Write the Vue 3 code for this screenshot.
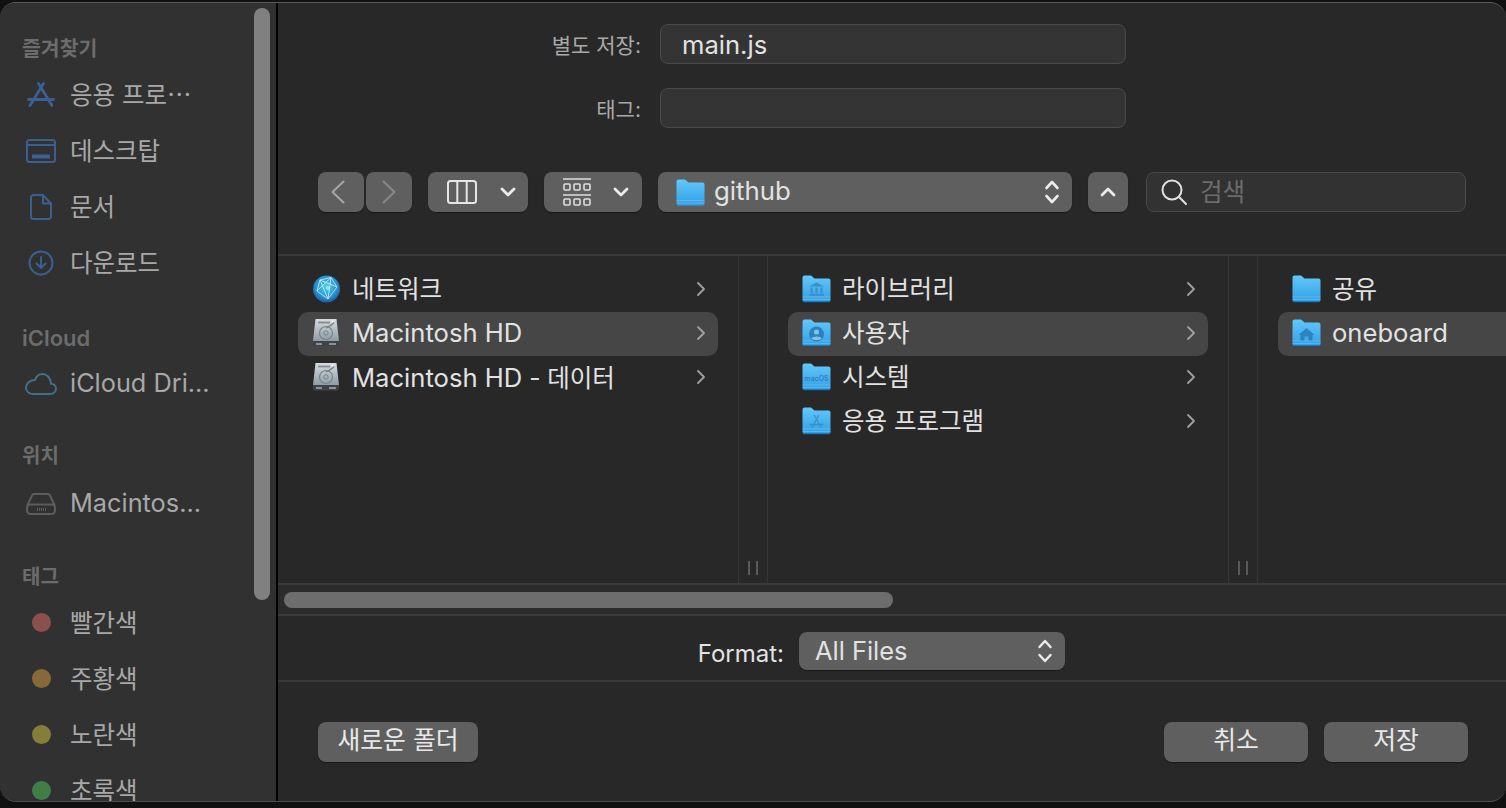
<script setup>
const favorites = [
  { icon: 'apps', label: '응용 프로⋯' },
  { icon: 'desktop', label: '데스크탑' },
  { icon: 'doc', label: '문서' },
  { icon: 'download', label: '다운로드' },
];
const tags = [
  { label: '빨간색', color: '#8a4f4e' },
  { label: '주황색', color: '#876839' },
  { label: '노란색', color: '#857d3a' },
  { label: '초록색', color: '#3f7f47' },
];
const columns = [
  {
    rows: [
      { icon: 'globe', label: '네트워크', ko: true, more: true },
      { icon: 'disk', label: 'Macintosh HD', more: true, selected: true },
      { icon: 'disk', label: 'Macintosh HD', suffix: ' - 데이터', more: true },
    ],
  },
  {
    rows: [
      { icon: 'folder', badge: 'library', label: '라이브러리', ko: true, more: true },
      { icon: 'folder', badge: 'user', label: '사용자', ko: true, more: true, selected: true },
      { icon: 'folder', badge: 'macos', label: '시스템', ko: true, more: true },
      { icon: 'folder', badge: 'apps', label: '응용 프로그램', ko: true, more: true },
    ],
  },
  {
    rows: [
      { icon: 'folder', label: '공유', ko: true },
      { icon: 'folder', badge: 'home', label: 'oneboard', selected: true },
    ],
  },
];
</script>

<template>
  <svg class="defs" width="0" height="0">
    <defs>
      <linearGradient id="folderFill" x1="0" y1="0" x2="0" y2="1">
        <stop offset="0" stop-color="#62c8fb" />
        <stop offset="1" stop-color="#329fe6" />
      </linearGradient>
      <linearGradient id="diskFill" x1="0" y1="0" x2="0" y2="1">
        <stop offset="0" stop-color="#d6dde0" />
        <stop offset="1" stop-color="#8f9ca3" />
      </linearGradient>
      <radialGradient id="globeFill" cx="0.5" cy="0.42" r="0.62">
        <stop offset="0" stop-color="#54d2e2" />
        <stop offset="0.65" stop-color="#2a8ed0" />
        <stop offset="1" stop-color="#1b4e9a" />
      </radialGradient>
    </defs>
  </svg>
  <div class="window">
    <aside class="sidebar">
      <div class="side-title first">즐겨찾기</div>
      <div v-for="item in favorites" :key="item.label" class="side-item ko">
        <span class="side-icon">
          <svg v-if="item.icon === 'apps'" width="28" height="25" viewBox="0 0 28 25" fill="none" stroke="#3a5f92" stroke-width="2.800" stroke-linecap="round">
            <path d="M11.500 1.500 L25 23.500" />
            <path d="M16.500 1.500 L3 23.500" />
            <path d="M1.500 17.500 H26.500" />
          </svg>
          <svg v-else-if="item.icon === 'desktop'" width="30" height="24" viewBox="0 0 30 24" fill="none" stroke="#3a5f92" stroke-width="2">
            <rect x="1" y="1" width="28" height="22" rx="2.500" />
            <path d="M1 6 H29" />
            <path d="M6 17.500 H24" stroke-width="4" />
          </svg>
          <svg v-else-if="item.icon === 'doc'" width="22" height="26" viewBox="0 0 22 26" fill="none" stroke="#3a5f92" stroke-width="2">
            <path d="M3.500 1 H13 L21 9.500 V22.500 A2.500 2.500 0 0 1 18.500 25 H3.500 A2.500 2.500 0 0 1 1 22.500 V3.500 A2.500 2.500 0 0 1 3.500 1 Z" />
            <path d="M13 1 V9.500 H21" />
          </svg>
          <svg v-else width="26" height="26" viewBox="0 0 26 26" fill="none" stroke="#3a5f92" stroke-width="2" stroke-linecap="round" stroke-linejoin="round">
            <circle cx="13" cy="13" r="11.500" />
            <path d="M13 7 V18 M8.500 13.500 L13 18 L17.500 13.500" />
          </svg>
        </span>
        <span>{{ item.label }}</span>
      </div>

      <div class="side-title cloud">iCloud</div>
      <div class="side-item">
        <span class="side-icon">
          <svg width="32" height="24" viewBox="0 0 32 24" fill="none" stroke="#41708a" stroke-width="2">
            <path d="M7.500 22 H25 C28.500 22 31 19.800 31 16.800 C31 14 28.800 12 26.200 11.800 C25.600 6 22 2 17.500 2 C13.500 2 11.200 4.600 10 8 C5 7.800 1 11.500 1 15.500 C1 19.200 3.800 22 7.500 22 Z" />
          </svg>
        </span>
        <span>iCloud Dri...</span>
      </div>

      <div class="side-title place">위치</div>
      <div class="side-item">
        <span class="side-icon">
          <svg width="30" height="22" viewBox="0 0 30 22" fill="none" stroke="#5d5d5d" stroke-width="2">
            <path d="M1 13 L6 2.500 A2.500 2.500 0 0 1 8 1 H22 A2.500 2.500 0 0 1 24 2.500 L29 13" />
            <rect x="1" y="11.500" width="28" height="9.500" rx="3.500" />
            <path d="M11 16.500 H20" stroke-width="3" stroke-dasharray="1 1" />
          </svg>
        </span>
        <span>Macintos...</span>
      </div>

      <div class="side-title tag">태그</div>
      <div v-for="tag in tags" :key="tag.label" class="side-item ko">
        <span class="side-icon">
          <span class="dot" :style="{ background: tag.color }"></span>
        </span>
        <span>{{ tag.label }}</span>
      </div>

      <div class="side-scroll"></div>
    </aside>

    <main class="panel">
      <div class="name-form">
        <div class="form-row">
          <label>별도 저장:</label>
          <div class="field">main.js</div>
        </div>
        <div class="form-row">
          <label>태그:</label>
          <div class="field"></div>
        </div>
      </div>

      <div class="toolbar">
        <div class="nav-pair">
          <div class="btn nav back">
            <svg width="14" height="24" viewBox="0 0 14 24" fill="none" stroke="#a6a6a6" stroke-width="2" stroke-linecap="round" stroke-linejoin="round"><path d="M12.500 1.500 L1.500 12 L12.500 22.500" /></svg>
          </div>
          <div class="btn nav">
            <svg width="14" height="24" viewBox="0 0 14 24" fill="none" stroke="#878787" stroke-width="2" stroke-linecap="round" stroke-linejoin="round"><path d="M1.500 1.500 L12.500 12 L1.500 22.500" /></svg>
          </div>
        </div>
        <div class="btn view">
          <svg width="30" height="24" viewBox="0 0 30 24" fill="none" stroke="#e6e6e6" stroke-width="2"><rect x="1" y="1" width="28" height="22" rx="2.500" /><path d="M10.300 1 V23 M19.700 1 V23" /></svg>
          <svg class="chev" width="16" height="10" viewBox="0 0 16 10" fill="none" stroke="#ececec" stroke-width="2.800" stroke-linecap="round" stroke-linejoin="round"><path d="M2 2 L8 8 L14 2" /></svg>
        </div>
        <div class="btn group">
          <svg width="28" height="28" viewBox="0 0 28 28" fill="none" stroke="#dedede" stroke-width="1.600">
            <path d="M0 1 H28 M0 17 H28" />
            <rect x="1" y="6" width="6" height="6" rx="1" />
            <rect x="11" y="6" width="6" height="6" rx="1" />
            <rect x="21" y="6" width="6" height="6" rx="1" />
            <rect x="1" y="21" width="6" height="6" rx="1" />
            <rect x="11" y="21" width="6" height="6" rx="1" />
            <rect x="21" y="21" width="6" height="6" rx="1" />
          </svg>
          <svg class="chev" width="16" height="10" viewBox="0 0 16 10" fill="none" stroke="#ececec" stroke-width="2.800" stroke-linecap="round" stroke-linejoin="round"><path d="M2 2 L8 8 L14 2" /></svg>
        </div>
        <div class="btn path">
          <svg width="29" height="27" viewBox="0 0 29 27">
            <path d="M0.500 2.500 A2 2 0 0 1 2.500 0.500 H9 L12.500 3.500 H26.500 A2 2 0 0 1 28.500 5.500 V24.500 A2 2 0 0 1 26.500 26.500 H2.500 A2 2 0 0 1 0.500 24.500 Z" fill="url(#folderFill)" />
            <path d="M0.500 21.500 H28.500 M0.500 24 H28.500" stroke="#8ad6f9" stroke-width="0.800" opacity="0.500" />
          </svg>
          <span class="path-name">github</span>
          <svg class="updown" width="16" height="26" viewBox="0 0 16 26" fill="none" stroke="#ececec" stroke-width="2.600" stroke-linecap="round" stroke-linejoin="round"><path d="M2.500 9 L8 3 L13.500 9 M2.500 17 L8 23 L13.500 17" /></svg>
        </div>
        <div class="btn up">
          <svg width="16" height="10" viewBox="0 0 16 10" fill="none" stroke="#ececec" stroke-width="2.800" stroke-linecap="round" stroke-linejoin="round"><path d="M2 8 L8 2 L14 8" /></svg>
        </div>
        <div class="search">
          <svg width="26" height="26" viewBox="0 0 26 26" fill="none" stroke="#e0e0e0" stroke-width="2" stroke-linecap="round"><circle cx="11" cy="11" r="9.500" /><path d="M17.800 17.800 L25 25" /></svg>
          <span>검색</span>
        </div>
      </div>

      <div class="browser">
        <template v-for="(col, i) in columns" :key="i">
          <div class="column" :class="{ last: i === columns.length - 1 }">
            <div v-for="(row, r) in col.rows" :key="r" class="row" :class="{ selected: row.selected }">
              <svg v-if="row.icon === 'folder'" class="row-icon" width="30" height="28" viewBox="0 0 30 28">
                <path d="M0.500 2.500 A2 2 0 0 1 2.500 0.500 H9 L12.500 3.500 H26.500 A2 2 0 0 1 28.500 5.500 V25 A2 2 0 0 1 26.500 27 H2.500 A2 2 0 0 1 0.500 25 Z" fill="url(#folderFill)" />
                <path d="M0.500 22 H28.500 M0.500 24.500 H28.500" stroke="#8ad6f9" stroke-width="0.800" opacity="0.500" />
                <path d="M1.500 27 H27.500" stroke="#12507a" stroke-width="1" />
                <g v-if="row.badge === 'library'" fill="#3b8fc8">
                  <path d="M14.500 7.500 L22 11.500 H7 Z" />
                  <rect x="8.500" y="12.500" width="2.200" height="6" />
                  <rect x="13.400" y="12.500" width="2.200" height="6" />
                  <rect x="18.300" y="12.500" width="2.200" height="6" />
                  <rect x="7" y="19" width="15" height="1.800" />
                </g>
                <g v-if="row.badge === 'user'">
                  <circle cx="14.500" cy="15" r="7.500" fill="#2f7fb8" />
                  <circle cx="14.500" cy="13" r="2.600" fill="#79c4ee" />
                  <path d="M9.300 19.500 C10.500 16.800 18.500 16.800 19.700 19.500 C17.500 21.500 11.500 21.500 9.300 19.500 Z" fill="#79c4ee" />
                </g>
                <text v-if="row.badge === 'macos'" x="14.500" y="17.500" text-anchor="middle" class="mac-badge">macOS</text>
                <g v-if="row.badge === 'apps'" fill="none" stroke="#3b8fc8" stroke-width="1.300" stroke-linecap="round">
                  <path d="M12.500 8.500 L19 20.500 M16.500 8.500 L10 20.500 M8 17.500 H21" />
                </g>
                <g v-if="row.badge === 'home'" fill="#2f82c0">
                  <path d="M14.500 9 L22.500 16 H20.500 V21.500 H16.500 V17.500 H12.500 V21.500 H8.500 V16 H6.500 Z" />
                </g>
              </svg>
              <svg v-else-if="row.icon === 'globe'" class="row-icon" width="30" height="30" viewBox="0 0 30 30">
                <circle cx="14.500" cy="15" r="13.500" fill="url(#globeFill)" />
                <path d="M8 6 L19 3.500 L25 13 L16 25 L5 17 Z M8 6 L16 25 M19 3.500 L5 17 M25 13 L8 6 M19 3.500 L16 25" fill="none" stroke="#c8f4f6" stroke-width="0.800" />
                <circle cx="16" cy="14" r="2" fill="#d6fbfb" opacity="0.500" />
              </svg>
              <svg v-else class="row-icon" width="30" height="30" viewBox="0 0 30 30">
                <path d="M3.500 1 H24.500 L27 23 H1 Z" fill="url(#diskFill)" />
                <path d="M1 23 H27 V27 A1.500 1.500 0 0 1 25.500 28.500 H2.500 A1.500 1.500 0 0 1 1 27 Z" fill="#3e4347" />
                <path d="M4 26 H10 M17 26 H24" stroke="#a6adb2" stroke-width="1.500" />
                <circle cx="14" cy="15" r="6.500" fill="none" stroke="#76838a" stroke-width="1.200" />
                <circle cx="14" cy="15" r="2.200" fill="none" stroke="#76838a" stroke-width="1" />
                <path d="M14 10 C18 8 20 7 22 4.500" fill="none" stroke="#76838a" stroke-width="1.300" />
                <path d="M6 4.500 H18" stroke="#818e95" stroke-width="1.800" />
                <circle cx="20.500" cy="3.500" r="1.100" fill="#fff" />
              </svg>
              <span class="row-label" :class="{ ko: row.ko }">{{ row.label }}<span v-if="row.suffix" class="suffix">{{ row.suffix }}</span></span>
              <svg v-if="row.more" class="row-more" width="10" height="16" viewBox="0 0 10 16" fill="none" stroke="#a0a0a0" stroke-width="1.800" stroke-linecap="round" stroke-linejoin="round"><path d="M2 2 L8 8 L2 14" /></svg>
            </div>
          </div>
          <div v-if="i < columns.length - 1" class="col-handle"><span></span><span></span></div>
        </template>
      </div>

      <div class="hscroll"><div class="thumb"></div></div>

      <div class="format-row">
        <label>Format:</label>
        <div class="btn select">
          <span>All Files</span>
          <svg width="16" height="26" viewBox="0 0 16 26" fill="none" stroke="#ececec" stroke-width="2.400" stroke-linecap="round" stroke-linejoin="round"><path d="M2.500 9 L8 3 L13.500 9 M2.500 17 L8 23 L13.500 17" /></svg>
        </div>
      </div>

      <div class="actions">
        <div class="btn action new-folder">새로운 폴더</div>
        <div class="action-right">
          <div class="btn action wide">취소</div>
          <div class="btn action wide">저장</div>
        </div>
      </div>
    </main>
  </div>
</template>

<style scoped>
.defs {
  position: absolute;
}
.window {
  display: flex;
  height: 800px;
  margin-top: 2px;
  border-radius: 16px;
  border-top: 1px solid #5a5a5a;
  border-bottom: 1px solid #4c4c4c;
  box-sizing: border-box;
  overflow: hidden;
  background: #282828;
  font-family: Inter, "Noto Sans CJK KR", sans-serif;
  color: #e2e2e2;
}
.sidebar {
  position: relative;
  flex: 0 0 276px;
  box-sizing: border-box;
  padding: 32px 0 0 22px;
  background: #313131;
  color: #a8a8a8;
  overflow: hidden;
}
.side-title {
  height: 30px;
  line-height: 28px;
  font-size: 20px;
  font-weight: 600;
  color: #6c6c6c;
}
.side-title.first { font-size: 20.500px; }
.side-title.cloud { margin-top: 35px; font-size: 22px; }
.side-title.place { margin-top: 32px; height: 32px; }
.side-title.tag { margin-top: 33px; }
.side-item {
  display: flex;
  align-items: center;
  height: 56px;
  font-size: 25.300px;
  white-space: nowrap;
}
.side-item.ko {
  font-size: 24.500px;
}
.side-icon {
  flex: 0 0 48px;
  display: flex;
  justify-content: center;
  box-sizing: border-box;
  padding: 3px 10px 0 0;
}
.dot {
  width: 19px;
  height: 19px;
  border-radius: 50%;
}
.side-scroll {
  position: absolute;
  top: 5px;
  left: 254px;
  width: 16px;
  height: 592px;
  border-radius: 8px;
  background: #808080;
}
.panel {
  flex: 1;
  min-width: 0;
  display: flex;
  flex-direction: column;
  border-left: 2px solid #000;
}
.name-form {
  display: flex;
  flex-direction: column;
  gap: 24px;
  padding-top: 21px;
}
.form-row {
  display: flex;
  align-items: center;
  height: 40px;
}
.form-row label {
  width: 363px;
  margin-right: 19px;
  text-align: right;
  font-size: 21px;
  color: #a8a8a8;
}
.field {
  box-sizing: border-box;
  width: 466px;
  height: 40px;
  line-height: 40px;
  padding-left: 21px;
  border: 1px solid #4a4a4a;
  border-radius: 8px;
  background: #343434;
  font-size: 25.600px;
}
.toolbar {
  display: flex;
  align-items: center;
  height: 40px;
  margin-top: 44px;
  padding-left: 40px;
}
.btn {
  display: flex;
  align-items: center;
  box-sizing: border-box;
  height: 40px;
  border-radius: 8px;
  background: #5f5f5f;
  box-shadow: 0 1px 1px rgba(0, 0, 0, 0.4);
}
.nav-pair {
  display: flex;
  gap: 2px;
}
.nav {
  width: 46px;
  justify-content: center;
}
.nav.back {
  padding-right: 6px;
}
.view {
  width: 100px;
  margin-left: 16px;
  padding: 0 12px 0 19px;
  justify-content: space-between;
}
.group {
  width: 98px;
  margin-left: 16px;
  padding: 0 13px 0 19px;
  justify-content: space-between;
}
.path {
  width: 414px;
  margin-left: 16px;
  padding: 0 12px 0 18px;
}
.path-name {
  flex: 1;
  margin-left: 9px;
  padding-bottom: 4px;
  font-size: 25.800px;
}
.up {
  width: 40px;
  margin-left: 16px;
  justify-content: center;
}
.search {
  display: flex;
  align-items: center;
  box-sizing: border-box;
  width: 320px;
  height: 40px;
  margin-left: 18px;
  padding-left: 14px;
  border: 1px solid #4a4a4a;
  border-radius: 8px;
  background: #323232;
  font-size: 24.500px;
  color: #6c6c6c;
}
.search span {
  margin-left: 13px;
  padding-bottom: 4px;
}
.browser {
  display: flex;
  height: 331px;
  margin-top: 42px;
  box-sizing: border-box;
  border-top: 2px solid #3a3a3a;
  border-bottom: 2px solid #3a3a3a;
  overflow: hidden;
}
.column {
  flex: 0 0 460px;
  box-sizing: border-box;
  padding-top: 12px;
}
.column.last {
  flex: 1;
}
.row {
  display: flex;
  align-items: center;
  box-sizing: border-box;
  height: 44px;
  margin-left: 20px;
  margin-right: 20px;
  padding: 0 0 2px 14px;
  border-radius: 10px;
  font-size: 25.600px;
  white-space: nowrap;
}
.column.last .row {
  margin-right: -20px;
}
.row.selected {
  background: #464646;
}
.row-icon {
  flex: 0 0 30px;
}
.row-label {
  flex: 1;
  margin-left: 10px;
  padding-bottom: 2px;
}
.row-label.ko {
  padding-bottom: 4px;
  font-size: 24.500px;
}
.suffix {
  font-size: 24.500px;
}
.row-more {
  margin-right: 12px;
}
.mac-badge {
  font-family: Inter, sans-serif;
  font-size: 7px;
  font-weight: 600;
  fill: #2f82c0;
}
.col-handle {
  position: relative;
  flex: 0 0 30px;
  box-sizing: border-box;
  border-left: 1px solid #363636;
  border-right: 1px solid #363636;
}
.col-handle span {
  position: absolute;
  bottom: 8px;
  width: 2px;
  height: 14px;
  background: #5a5a5a;
}
.col-handle span:first-child { left: 9px; }
.col-handle span:last-child { left: 17px; }
.hscroll {
  height: 29px;
  display: flex;
  align-items: center;
  padding-left: 6px;
  background: #2b2b2b;
}
.thumb {
  width: 609px;
  height: 16px;
  border-radius: 8px;
  background: #6d6d6d;
}
.format-row {
  display: flex;
  align-items: center;
  height: 58px;
  padding-top: 6px;
  border-top: 2px solid #3a3a3a;
  border-bottom: 2px solid #3a3a3a;
}
.format-row label {
  width: 506px;
  margin-right: 15px;
  padding-top: 4px;
  text-align: right;
  font-size: 24px;
}
.select {
  justify-content: space-between;
  width: 266px;
  height: 38px;
  padding: 0 12px 0 16px;
  font-size: 25.400px;
}
.select span {
  padding-bottom: 2px;
}
.actions {
  display: flex;
  justify-content: space-between;
  margin-top: 40px;
  padding: 0 38px 0 40px;
}
.action {
  justify-content: center;
  padding-bottom: 8px;
  font-size: 24.800px;
  color: #e8e8e8;
}
.new-folder {
  width: 160px;
}
.action-right {
  display: flex;
  gap: 16px;
}
.wide {
  width: 144px;
}
</style>

<style>
html, body {
  background: #111;
  overflow: hidden;
}
</style>
